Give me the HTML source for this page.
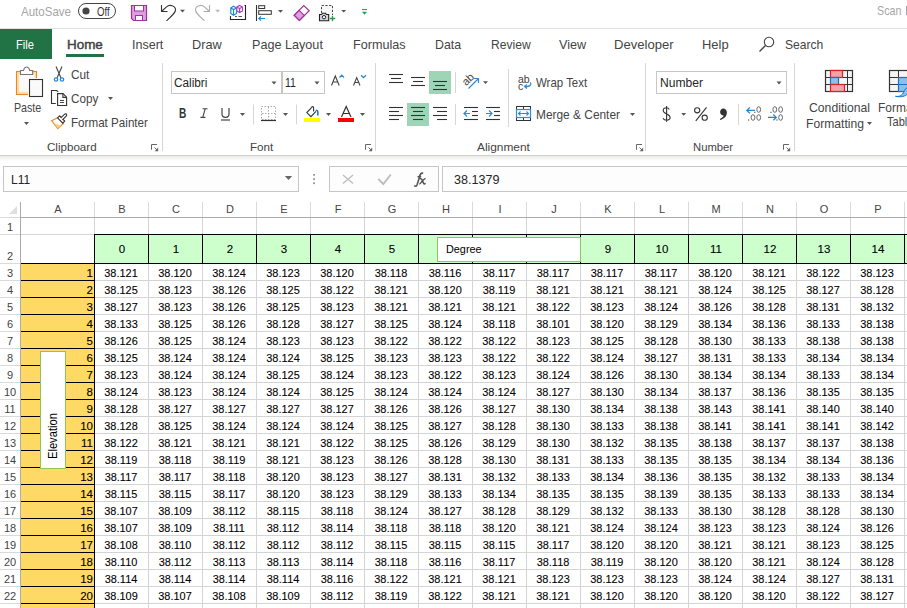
<!DOCTYPE html><html><head><meta charset="utf-8"><style>
html,body{margin:0;padding:0}
body{width:907px;height:608px;overflow:hidden;position:relative;background:#fff;font-family:"Liberation Sans",sans-serif}
.t{position:absolute;white-space:nowrap;transform-origin:0 0;z-index:3}
.b{position:absolute}
.s{position:absolute;overflow:visible;z-index:2}
.hc{position:absolute;top:202px;height:14px;line-height:14px;text-align:center;font-size:11px;color:#444}
.rh{position:absolute;left:0;width:20px;height:14px;line-height:14px;text-align:center;font-size:11px;color:#444}
.gc{position:absolute;height:14px;line-height:14px;text-align:center;font-size:11.5px;color:#000;-webkit-text-stroke:0.1px #000}
.an{position:absolute;left:21px;width:72px;height:14px;line-height:14px;text-align:right;font-size:11.5px;color:#000;-webkit-text-stroke:0.1px #000}
.nc{position:absolute;width:54px;height:14px;line-height:14px;text-align:center;font-size:11.7px;color:#000;transform:scaleX(0.935);-webkit-text-stroke:0.1px #000}
</style></head><body>
<div class="b" style="left:0px;top:202px;width:907px;height:15px;background:#fff"></div>
<div class="b" style="left:0px;top:217px;width:20px;height:1px;background:#DADADA"></div>
<div class="b" style="left:20px;top:217px;width:887px;height:1px;background:#ABABAB"></div>
<div class="b" style="left:20px;top:202px;width:1px;height:406px;background:#ABABAB"></div>
<svg class="s" style="left:9px;top:206px;" width="8" height="8" viewBox="0 0 8 8"><path d="M8 0 L8 8 L0 8 Z" fill="#DFDFDF"/></svg>
<div class="b" style="left:94px;top:202px;width:1px;height:15px;background:#DADADA"></div>
<div class="b" style="left:148px;top:202px;width:1px;height:15px;background:#DADADA"></div>
<div class="b" style="left:202px;top:202px;width:1px;height:15px;background:#DADADA"></div>
<div class="b" style="left:256px;top:202px;width:1px;height:15px;background:#DADADA"></div>
<div class="b" style="left:310px;top:202px;width:1px;height:15px;background:#DADADA"></div>
<div class="b" style="left:364px;top:202px;width:1px;height:15px;background:#DADADA"></div>
<div class="b" style="left:418px;top:202px;width:1px;height:15px;background:#DADADA"></div>
<div class="b" style="left:472px;top:202px;width:1px;height:15px;background:#DADADA"></div>
<div class="b" style="left:526px;top:202px;width:1px;height:15px;background:#DADADA"></div>
<div class="b" style="left:580px;top:202px;width:1px;height:15px;background:#DADADA"></div>
<div class="b" style="left:634px;top:202px;width:1px;height:15px;background:#DADADA"></div>
<div class="b" style="left:688px;top:202px;width:1px;height:15px;background:#DADADA"></div>
<div class="b" style="left:742px;top:202px;width:1px;height:15px;background:#DADADA"></div>
<div class="b" style="left:796px;top:202px;width:1px;height:15px;background:#DADADA"></div>
<div class="b" style="left:850px;top:202px;width:1px;height:15px;background:#DADADA"></div>
<div class="b" style="left:904px;top:202px;width:1px;height:15px;background:#DADADA"></div>
<div class="b" style="left:21px;top:234px;width:886px;height:1px;background:#D4D4D4"></div>
<div class="b" style="left:0px;top:234px;width:20px;height:1px;background:#DADADA"></div>
<div class="b" style="left:21px;top:263px;width:886px;height:1px;background:#D4D4D4"></div>
<div class="b" style="left:0px;top:263px;width:20px;height:1px;background:#DADADA"></div>
<div class="b" style="left:21px;top:280px;width:886px;height:1px;background:#D4D4D4"></div>
<div class="b" style="left:0px;top:280px;width:20px;height:1px;background:#DADADA"></div>
<div class="b" style="left:21px;top:297px;width:886px;height:1px;background:#D4D4D4"></div>
<div class="b" style="left:0px;top:297px;width:20px;height:1px;background:#DADADA"></div>
<div class="b" style="left:21px;top:314px;width:886px;height:1px;background:#D4D4D4"></div>
<div class="b" style="left:0px;top:314px;width:20px;height:1px;background:#DADADA"></div>
<div class="b" style="left:21px;top:331px;width:886px;height:1px;background:#D4D4D4"></div>
<div class="b" style="left:0px;top:331px;width:20px;height:1px;background:#DADADA"></div>
<div class="b" style="left:21px;top:348px;width:886px;height:1px;background:#D4D4D4"></div>
<div class="b" style="left:0px;top:348px;width:20px;height:1px;background:#DADADA"></div>
<div class="b" style="left:21px;top:365px;width:886px;height:1px;background:#D4D4D4"></div>
<div class="b" style="left:0px;top:365px;width:20px;height:1px;background:#DADADA"></div>
<div class="b" style="left:21px;top:382px;width:886px;height:1px;background:#D4D4D4"></div>
<div class="b" style="left:0px;top:382px;width:20px;height:1px;background:#DADADA"></div>
<div class="b" style="left:21px;top:399px;width:886px;height:1px;background:#D4D4D4"></div>
<div class="b" style="left:0px;top:399px;width:20px;height:1px;background:#DADADA"></div>
<div class="b" style="left:21px;top:416px;width:886px;height:1px;background:#D4D4D4"></div>
<div class="b" style="left:0px;top:416px;width:20px;height:1px;background:#DADADA"></div>
<div class="b" style="left:21px;top:433px;width:886px;height:1px;background:#D4D4D4"></div>
<div class="b" style="left:0px;top:433px;width:20px;height:1px;background:#DADADA"></div>
<div class="b" style="left:21px;top:450px;width:886px;height:1px;background:#D4D4D4"></div>
<div class="b" style="left:0px;top:450px;width:20px;height:1px;background:#DADADA"></div>
<div class="b" style="left:21px;top:467px;width:886px;height:1px;background:#D4D4D4"></div>
<div class="b" style="left:0px;top:467px;width:20px;height:1px;background:#DADADA"></div>
<div class="b" style="left:21px;top:484px;width:886px;height:1px;background:#D4D4D4"></div>
<div class="b" style="left:0px;top:484px;width:20px;height:1px;background:#DADADA"></div>
<div class="b" style="left:21px;top:501px;width:886px;height:1px;background:#D4D4D4"></div>
<div class="b" style="left:0px;top:501px;width:20px;height:1px;background:#DADADA"></div>
<div class="b" style="left:21px;top:518px;width:886px;height:1px;background:#D4D4D4"></div>
<div class="b" style="left:0px;top:518px;width:20px;height:1px;background:#DADADA"></div>
<div class="b" style="left:21px;top:535px;width:886px;height:1px;background:#D4D4D4"></div>
<div class="b" style="left:0px;top:535px;width:20px;height:1px;background:#DADADA"></div>
<div class="b" style="left:21px;top:552px;width:886px;height:1px;background:#D4D4D4"></div>
<div class="b" style="left:0px;top:552px;width:20px;height:1px;background:#DADADA"></div>
<div class="b" style="left:21px;top:569px;width:886px;height:1px;background:#D4D4D4"></div>
<div class="b" style="left:0px;top:569px;width:20px;height:1px;background:#DADADA"></div>
<div class="b" style="left:21px;top:586px;width:886px;height:1px;background:#D4D4D4"></div>
<div class="b" style="left:0px;top:586px;width:20px;height:1px;background:#DADADA"></div>
<div class="b" style="left:21px;top:603px;width:886px;height:1px;background:#D4D4D4"></div>
<div class="b" style="left:0px;top:603px;width:20px;height:1px;background:#DADADA"></div>
<div class="b" style="left:94px;top:218px;width:1px;height:390px;background:#D4D4D4"></div>
<div class="b" style="left:148px;top:218px;width:1px;height:390px;background:#D4D4D4"></div>
<div class="b" style="left:202px;top:218px;width:1px;height:390px;background:#D4D4D4"></div>
<div class="b" style="left:256px;top:218px;width:1px;height:390px;background:#D4D4D4"></div>
<div class="b" style="left:310px;top:218px;width:1px;height:390px;background:#D4D4D4"></div>
<div class="b" style="left:364px;top:218px;width:1px;height:390px;background:#D4D4D4"></div>
<div class="b" style="left:418px;top:218px;width:1px;height:390px;background:#D4D4D4"></div>
<div class="b" style="left:472px;top:218px;width:1px;height:390px;background:#D4D4D4"></div>
<div class="b" style="left:526px;top:218px;width:1px;height:390px;background:#D4D4D4"></div>
<div class="b" style="left:580px;top:218px;width:1px;height:390px;background:#D4D4D4"></div>
<div class="b" style="left:634px;top:218px;width:1px;height:390px;background:#D4D4D4"></div>
<div class="b" style="left:688px;top:218px;width:1px;height:390px;background:#D4D4D4"></div>
<div class="b" style="left:742px;top:218px;width:1px;height:390px;background:#D4D4D4"></div>
<div class="b" style="left:796px;top:218px;width:1px;height:390px;background:#D4D4D4"></div>
<div class="b" style="left:850px;top:218px;width:1px;height:390px;background:#D4D4D4"></div>
<div class="b" style="left:904px;top:218px;width:1px;height:390px;background:#D4D4D4"></div>
<div id="grid">
</div>
<div class="b" style="left:94px;top:234px;width:813px;height:30px;background:#CCFFCC"></div>
<div class="b" style="left:94px;top:234px;width:813px;height:1px;background:#000"></div>
<div class="b" style="left:94px;top:263px;width:813px;height:1px;background:#000"></div>
<div class="b" style="left:94px;top:234px;width:1px;height:30px;background:#000"></div>
<div class="b" style="left:148px;top:234px;width:1px;height:30px;background:#000"></div>
<div class="b" style="left:202px;top:234px;width:1px;height:30px;background:#000"></div>
<div class="b" style="left:256px;top:234px;width:1px;height:30px;background:#000"></div>
<div class="b" style="left:310px;top:234px;width:1px;height:30px;background:#000"></div>
<div class="b" style="left:364px;top:234px;width:1px;height:30px;background:#000"></div>
<div class="b" style="left:418px;top:234px;width:1px;height:30px;background:#000"></div>
<div class="b" style="left:472px;top:234px;width:1px;height:30px;background:#000"></div>
<div class="b" style="left:526px;top:234px;width:1px;height:30px;background:#000"></div>
<div class="b" style="left:580px;top:234px;width:1px;height:30px;background:#000"></div>
<div class="b" style="left:634px;top:234px;width:1px;height:30px;background:#000"></div>
<div class="b" style="left:688px;top:234px;width:1px;height:30px;background:#000"></div>
<div class="b" style="left:742px;top:234px;width:1px;height:30px;background:#000"></div>
<div class="b" style="left:796px;top:234px;width:1px;height:30px;background:#000"></div>
<div class="b" style="left:850px;top:234px;width:1px;height:30px;background:#000"></div>
<div class="b" style="left:904px;top:234px;width:1px;height:30px;background:#000"></div>
<div class="b" style="left:21px;top:264px;width:73px;height:344px;background:#FFD966"></div>
<div class="b" style="left:21px;top:263px;width:74px;height:1px;background:#000"></div>
<div class="b" style="left:21px;top:280px;width:74px;height:1px;background:#000"></div>
<div class="b" style="left:21px;top:297px;width:74px;height:1px;background:#000"></div>
<div class="b" style="left:21px;top:314px;width:74px;height:1px;background:#000"></div>
<div class="b" style="left:21px;top:331px;width:74px;height:1px;background:#000"></div>
<div class="b" style="left:21px;top:348px;width:74px;height:1px;background:#000"></div>
<div class="b" style="left:21px;top:365px;width:74px;height:1px;background:#000"></div>
<div class="b" style="left:21px;top:382px;width:74px;height:1px;background:#000"></div>
<div class="b" style="left:21px;top:399px;width:74px;height:1px;background:#000"></div>
<div class="b" style="left:21px;top:416px;width:74px;height:1px;background:#000"></div>
<div class="b" style="left:21px;top:433px;width:74px;height:1px;background:#000"></div>
<div class="b" style="left:21px;top:450px;width:74px;height:1px;background:#000"></div>
<div class="b" style="left:21px;top:467px;width:74px;height:1px;background:#000"></div>
<div class="b" style="left:21px;top:484px;width:74px;height:1px;background:#000"></div>
<div class="b" style="left:21px;top:501px;width:74px;height:1px;background:#000"></div>
<div class="b" style="left:21px;top:518px;width:74px;height:1px;background:#000"></div>
<div class="b" style="left:21px;top:535px;width:74px;height:1px;background:#000"></div>
<div class="b" style="left:21px;top:552px;width:74px;height:1px;background:#000"></div>
<div class="b" style="left:21px;top:569px;width:74px;height:1px;background:#000"></div>
<div class="b" style="left:21px;top:586px;width:74px;height:1px;background:#000"></div>
<div class="b" style="left:21px;top:603px;width:74px;height:1px;background:#000"></div>
<div class="b" style="left:94px;top:263px;width:1px;height:345px;background:#000"></div>
<div class="hc" style="left:21px;width:74px">A</div>
<div class="hc" style="left:95px;width:54px">B</div>
<div class="hc" style="left:149px;width:54px">C</div>
<div class="hc" style="left:203px;width:54px">D</div>
<div class="hc" style="left:257px;width:54px">E</div>
<div class="hc" style="left:311px;width:54px">F</div>
<div class="hc" style="left:365px;width:54px">G</div>
<div class="hc" style="left:419px;width:54px">H</div>
<div class="hc" style="left:473px;width:54px">I</div>
<div class="hc" style="left:527px;width:54px">J</div>
<div class="hc" style="left:581px;width:54px">K</div>
<div class="hc" style="left:635px;width:54px">L</div>
<div class="hc" style="left:689px;width:54px">M</div>
<div class="hc" style="left:743px;width:54px">N</div>
<div class="hc" style="left:797px;width:54px">O</div>
<div class="hc" style="left:851px;width:54px">P</div>
<div class="rh" style="top:220px">1</div>
<div class="rh" style="top:249px">2</div>
<div class="rh" style="top:266px">3</div>
<div class="rh" style="top:283px">4</div>
<div class="rh" style="top:300px">5</div>
<div class="rh" style="top:317px">6</div>
<div class="rh" style="top:334px">7</div>
<div class="rh" style="top:351px">8</div>
<div class="rh" style="top:368px">9</div>
<div class="rh" style="top:385px">10</div>
<div class="rh" style="top:402px">11</div>
<div class="rh" style="top:419px">12</div>
<div class="rh" style="top:436px">13</div>
<div class="rh" style="top:453px">14</div>
<div class="rh" style="top:470px">15</div>
<div class="rh" style="top:487px">16</div>
<div class="rh" style="top:504px">17</div>
<div class="rh" style="top:521px">18</div>
<div class="rh" style="top:538px">19</div>
<div class="rh" style="top:555px">20</div>
<div class="rh" style="top:572px">21</div>
<div class="rh" style="top:589px">22</div>
<div class="gc" style="left:95px;width:54px;top:242px">0</div>
<div class="gc" style="left:149px;width:54px;top:242px">1</div>
<div class="gc" style="left:203px;width:54px;top:242px">2</div>
<div class="gc" style="left:257px;width:54px;top:242px">3</div>
<div class="gc" style="left:311px;width:54px;top:242px">4</div>
<div class="gc" style="left:365px;width:54px;top:242px">5</div>
<div class="gc" style="left:581px;width:54px;top:242px">9</div>
<div class="gc" style="left:635px;width:54px;top:242px">10</div>
<div class="gc" style="left:689px;width:54px;top:242px">11</div>
<div class="gc" style="left:743px;width:54px;top:242px">12</div>
<div class="gc" style="left:797px;width:54px;top:242px">13</div>
<div class="gc" style="left:851px;width:54px;top:242px">14</div>
<div class="an" style="top:266px">1</div>
<div class="an" style="top:283px">2</div>
<div class="an" style="top:300px">3</div>
<div class="an" style="top:317px">4</div>
<div class="an" style="top:334px">5</div>
<div class="an" style="top:351px">6</div>
<div class="an" style="top:368px">7</div>
<div class="an" style="top:385px">8</div>
<div class="an" style="top:402px">9</div>
<div class="an" style="top:419px">10</div>
<div class="an" style="top:436px">11</div>
<div class="an" style="top:453px">12</div>
<div class="an" style="top:470px">13</div>
<div class="an" style="top:487px">14</div>
<div class="an" style="top:504px">15</div>
<div class="an" style="top:521px">16</div>
<div class="an" style="top:538px">17</div>
<div class="an" style="top:555px">18</div>
<div class="an" style="top:572px">19</div>
<div class="an" style="top:589px">20</div>
<div class="nc" style="left:94px;top:266px">38.121</div>
<div class="nc" style="left:148px;top:266px">38.120</div>
<div class="nc" style="left:202px;top:266px">38.124</div>
<div class="nc" style="left:256px;top:266px">38.123</div>
<div class="nc" style="left:310px;top:266px">38.120</div>
<div class="nc" style="left:364px;top:266px">38.118</div>
<div class="nc" style="left:418px;top:266px">38.116</div>
<div class="nc" style="left:472px;top:266px">38.117</div>
<div class="nc" style="left:526px;top:266px">38.117</div>
<div class="nc" style="left:580px;top:266px">38.117</div>
<div class="nc" style="left:634px;top:266px">38.117</div>
<div class="nc" style="left:688px;top:266px">38.120</div>
<div class="nc" style="left:742px;top:266px">38.121</div>
<div class="nc" style="left:796px;top:266px">38.122</div>
<div class="nc" style="left:850px;top:266px">38.123</div>
<div class="nc" style="left:94px;top:283px">38.125</div>
<div class="nc" style="left:148px;top:283px">38.123</div>
<div class="nc" style="left:202px;top:283px">38.126</div>
<div class="nc" style="left:256px;top:283px">38.125</div>
<div class="nc" style="left:310px;top:283px">38.122</div>
<div class="nc" style="left:364px;top:283px">38.121</div>
<div class="nc" style="left:418px;top:283px">38.120</div>
<div class="nc" style="left:472px;top:283px">38.119</div>
<div class="nc" style="left:526px;top:283px">38.121</div>
<div class="nc" style="left:580px;top:283px">38.121</div>
<div class="nc" style="left:634px;top:283px">38.121</div>
<div class="nc" style="left:688px;top:283px">38.124</div>
<div class="nc" style="left:742px;top:283px">38.125</div>
<div class="nc" style="left:796px;top:283px">38.127</div>
<div class="nc" style="left:850px;top:283px">38.128</div>
<div class="nc" style="left:94px;top:300px">38.127</div>
<div class="nc" style="left:148px;top:300px">38.123</div>
<div class="nc" style="left:202px;top:300px">38.126</div>
<div class="nc" style="left:256px;top:300px">38.125</div>
<div class="nc" style="left:310px;top:300px">38.123</div>
<div class="nc" style="left:364px;top:300px">38.121</div>
<div class="nc" style="left:418px;top:300px">38.121</div>
<div class="nc" style="left:472px;top:300px">38.121</div>
<div class="nc" style="left:526px;top:300px">38.122</div>
<div class="nc" style="left:580px;top:300px">38.123</div>
<div class="nc" style="left:634px;top:300px">38.124</div>
<div class="nc" style="left:688px;top:300px">38.126</div>
<div class="nc" style="left:742px;top:300px">38.128</div>
<div class="nc" style="left:796px;top:300px">38.131</div>
<div class="nc" style="left:850px;top:300px">38.132</div>
<div class="nc" style="left:94px;top:317px">38.133</div>
<div class="nc" style="left:148px;top:317px">38.125</div>
<div class="nc" style="left:202px;top:317px">38.126</div>
<div class="nc" style="left:256px;top:317px">38.128</div>
<div class="nc" style="left:310px;top:317px">38.127</div>
<div class="nc" style="left:364px;top:317px">38.125</div>
<div class="nc" style="left:418px;top:317px">38.124</div>
<div class="nc" style="left:472px;top:317px">38.118</div>
<div class="nc" style="left:526px;top:317px">38.101</div>
<div class="nc" style="left:580px;top:317px">38.120</div>
<div class="nc" style="left:634px;top:317px">38.129</div>
<div class="nc" style="left:688px;top:317px">38.134</div>
<div class="nc" style="left:742px;top:317px">38.136</div>
<div class="nc" style="left:796px;top:317px">38.133</div>
<div class="nc" style="left:850px;top:317px">38.138</div>
<div class="nc" style="left:94px;top:334px">38.126</div>
<div class="nc" style="left:148px;top:334px">38.125</div>
<div class="nc" style="left:202px;top:334px">38.124</div>
<div class="nc" style="left:256px;top:334px">38.123</div>
<div class="nc" style="left:310px;top:334px">38.123</div>
<div class="nc" style="left:364px;top:334px">38.122</div>
<div class="nc" style="left:418px;top:334px">38.122</div>
<div class="nc" style="left:472px;top:334px">38.122</div>
<div class="nc" style="left:526px;top:334px">38.123</div>
<div class="nc" style="left:580px;top:334px">38.125</div>
<div class="nc" style="left:634px;top:334px">38.128</div>
<div class="nc" style="left:688px;top:334px">38.130</div>
<div class="nc" style="left:742px;top:334px">38.133</div>
<div class="nc" style="left:796px;top:334px">38.138</div>
<div class="nc" style="left:850px;top:334px">38.138</div>
<div class="nc" style="left:94px;top:351px">38.125</div>
<div class="nc" style="left:148px;top:351px">38.124</div>
<div class="nc" style="left:202px;top:351px">38.124</div>
<div class="nc" style="left:256px;top:351px">38.124</div>
<div class="nc" style="left:310px;top:351px">38.125</div>
<div class="nc" style="left:364px;top:351px">38.123</div>
<div class="nc" style="left:418px;top:351px">38.123</div>
<div class="nc" style="left:472px;top:351px">38.122</div>
<div class="nc" style="left:526px;top:351px">38.122</div>
<div class="nc" style="left:580px;top:351px">38.124</div>
<div class="nc" style="left:634px;top:351px">38.127</div>
<div class="nc" style="left:688px;top:351px">38.131</div>
<div class="nc" style="left:742px;top:351px">38.133</div>
<div class="nc" style="left:796px;top:351px">38.134</div>
<div class="nc" style="left:850px;top:351px">38.134</div>
<div class="nc" style="left:94px;top:368px">38.123</div>
<div class="nc" style="left:148px;top:368px">38.124</div>
<div class="nc" style="left:202px;top:368px">38.124</div>
<div class="nc" style="left:256px;top:368px">38.125</div>
<div class="nc" style="left:310px;top:368px">38.124</div>
<div class="nc" style="left:364px;top:368px">38.123</div>
<div class="nc" style="left:418px;top:368px">38.122</div>
<div class="nc" style="left:472px;top:368px">38.123</div>
<div class="nc" style="left:526px;top:368px">38.124</div>
<div class="nc" style="left:580px;top:368px">38.126</div>
<div class="nc" style="left:634px;top:368px">38.130</div>
<div class="nc" style="left:688px;top:368px">38.134</div>
<div class="nc" style="left:742px;top:368px">38.134</div>
<div class="nc" style="left:796px;top:368px">38.133</div>
<div class="nc" style="left:850px;top:368px">38.134</div>
<div class="nc" style="left:94px;top:385px">38.124</div>
<div class="nc" style="left:148px;top:385px">38.123</div>
<div class="nc" style="left:202px;top:385px">38.124</div>
<div class="nc" style="left:256px;top:385px">38.124</div>
<div class="nc" style="left:310px;top:385px">38.125</div>
<div class="nc" style="left:364px;top:385px">38.124</div>
<div class="nc" style="left:418px;top:385px">38.124</div>
<div class="nc" style="left:472px;top:385px">38.124</div>
<div class="nc" style="left:526px;top:385px">38.127</div>
<div class="nc" style="left:580px;top:385px">38.130</div>
<div class="nc" style="left:634px;top:385px">38.134</div>
<div class="nc" style="left:688px;top:385px">38.137</div>
<div class="nc" style="left:742px;top:385px">38.136</div>
<div class="nc" style="left:796px;top:385px">38.135</div>
<div class="nc" style="left:850px;top:385px">38.135</div>
<div class="nc" style="left:94px;top:402px">38.128</div>
<div class="nc" style="left:148px;top:402px">38.127</div>
<div class="nc" style="left:202px;top:402px">38.127</div>
<div class="nc" style="left:256px;top:402px">38.127</div>
<div class="nc" style="left:310px;top:402px">38.127</div>
<div class="nc" style="left:364px;top:402px">38.126</div>
<div class="nc" style="left:418px;top:402px">38.126</div>
<div class="nc" style="left:472px;top:402px">38.127</div>
<div class="nc" style="left:526px;top:402px">38.130</div>
<div class="nc" style="left:580px;top:402px">38.134</div>
<div class="nc" style="left:634px;top:402px">38.138</div>
<div class="nc" style="left:688px;top:402px">38.143</div>
<div class="nc" style="left:742px;top:402px">38.141</div>
<div class="nc" style="left:796px;top:402px">38.140</div>
<div class="nc" style="left:850px;top:402px">38.140</div>
<div class="nc" style="left:94px;top:419px">38.128</div>
<div class="nc" style="left:148px;top:419px">38.125</div>
<div class="nc" style="left:202px;top:419px">38.124</div>
<div class="nc" style="left:256px;top:419px">38.124</div>
<div class="nc" style="left:310px;top:419px">38.124</div>
<div class="nc" style="left:364px;top:419px">38.125</div>
<div class="nc" style="left:418px;top:419px">38.127</div>
<div class="nc" style="left:472px;top:419px">38.128</div>
<div class="nc" style="left:526px;top:419px">38.130</div>
<div class="nc" style="left:580px;top:419px">38.133</div>
<div class="nc" style="left:634px;top:419px">38.138</div>
<div class="nc" style="left:688px;top:419px">38.141</div>
<div class="nc" style="left:742px;top:419px">38.141</div>
<div class="nc" style="left:796px;top:419px">38.141</div>
<div class="nc" style="left:850px;top:419px">38.142</div>
<div class="nc" style="left:94px;top:436px">38.122</div>
<div class="nc" style="left:148px;top:436px">38.121</div>
<div class="nc" style="left:202px;top:436px">38.121</div>
<div class="nc" style="left:256px;top:436px">38.121</div>
<div class="nc" style="left:310px;top:436px">38.122</div>
<div class="nc" style="left:364px;top:436px">38.125</div>
<div class="nc" style="left:418px;top:436px">38.126</div>
<div class="nc" style="left:472px;top:436px">38.129</div>
<div class="nc" style="left:526px;top:436px">38.130</div>
<div class="nc" style="left:580px;top:436px">38.132</div>
<div class="nc" style="left:634px;top:436px">38.135</div>
<div class="nc" style="left:688px;top:436px">38.138</div>
<div class="nc" style="left:742px;top:436px">38.137</div>
<div class="nc" style="left:796px;top:436px">38.137</div>
<div class="nc" style="left:850px;top:436px">38.138</div>
<div class="nc" style="left:94px;top:453px">38.119</div>
<div class="nc" style="left:148px;top:453px">38.118</div>
<div class="nc" style="left:202px;top:453px">38.119</div>
<div class="nc" style="left:256px;top:453px">38.121</div>
<div class="nc" style="left:310px;top:453px">38.123</div>
<div class="nc" style="left:364px;top:453px">38.126</div>
<div class="nc" style="left:418px;top:453px">38.128</div>
<div class="nc" style="left:472px;top:453px">38.130</div>
<div class="nc" style="left:526px;top:453px">38.131</div>
<div class="nc" style="left:580px;top:453px">38.133</div>
<div class="nc" style="left:634px;top:453px">38.135</div>
<div class="nc" style="left:688px;top:453px">38.135</div>
<div class="nc" style="left:742px;top:453px">38.134</div>
<div class="nc" style="left:796px;top:453px">38.134</div>
<div class="nc" style="left:850px;top:453px">38.136</div>
<div class="nc" style="left:94px;top:470px">38.117</div>
<div class="nc" style="left:148px;top:470px">38.117</div>
<div class="nc" style="left:202px;top:470px">38.118</div>
<div class="nc" style="left:256px;top:470px">38.120</div>
<div class="nc" style="left:310px;top:470px">38.123</div>
<div class="nc" style="left:364px;top:470px">38.127</div>
<div class="nc" style="left:418px;top:470px">38.131</div>
<div class="nc" style="left:472px;top:470px">38.132</div>
<div class="nc" style="left:526px;top:470px">38.133</div>
<div class="nc" style="left:580px;top:470px">38.134</div>
<div class="nc" style="left:634px;top:470px">38.136</div>
<div class="nc" style="left:688px;top:470px">38.135</div>
<div class="nc" style="left:742px;top:470px">38.132</div>
<div class="nc" style="left:796px;top:470px">38.133</div>
<div class="nc" style="left:850px;top:470px">38.134</div>
<div class="nc" style="left:94px;top:487px">38.115</div>
<div class="nc" style="left:148px;top:487px">38.115</div>
<div class="nc" style="left:202px;top:487px">38.117</div>
<div class="nc" style="left:256px;top:487px">38.120</div>
<div class="nc" style="left:310px;top:487px">38.123</div>
<div class="nc" style="left:364px;top:487px">38.129</div>
<div class="nc" style="left:418px;top:487px">38.133</div>
<div class="nc" style="left:472px;top:487px">38.134</div>
<div class="nc" style="left:526px;top:487px">38.135</div>
<div class="nc" style="left:580px;top:487px">38.135</div>
<div class="nc" style="left:634px;top:487px">38.139</div>
<div class="nc" style="left:688px;top:487px">38.135</div>
<div class="nc" style="left:742px;top:487px">38.133</div>
<div class="nc" style="left:796px;top:487px">38.133</div>
<div class="nc" style="left:850px;top:487px">38.134</div>
<div class="nc" style="left:94px;top:504px">38.107</div>
<div class="nc" style="left:148px;top:504px">38.109</div>
<div class="nc" style="left:202px;top:504px">38.112</div>
<div class="nc" style="left:256px;top:504px">38.115</div>
<div class="nc" style="left:310px;top:504px">38.118</div>
<div class="nc" style="left:364px;top:504px">38.124</div>
<div class="nc" style="left:418px;top:504px">38.127</div>
<div class="nc" style="left:472px;top:504px">38.128</div>
<div class="nc" style="left:526px;top:504px">38.129</div>
<div class="nc" style="left:580px;top:504px">38.132</div>
<div class="nc" style="left:634px;top:504px">38.133</div>
<div class="nc" style="left:688px;top:504px">38.130</div>
<div class="nc" style="left:742px;top:504px">38.128</div>
<div class="nc" style="left:796px;top:504px">38.128</div>
<div class="nc" style="left:850px;top:504px">38.130</div>
<div class="nc" style="left:94px;top:521px">38.107</div>
<div class="nc" style="left:148px;top:521px">38.109</div>
<div class="nc" style="left:202px;top:521px">38.111</div>
<div class="nc" style="left:256px;top:521px">38.112</div>
<div class="nc" style="left:310px;top:521px">38.114</div>
<div class="nc" style="left:364px;top:521px">38.118</div>
<div class="nc" style="left:418px;top:521px">38.118</div>
<div class="nc" style="left:472px;top:521px">38.120</div>
<div class="nc" style="left:526px;top:521px">38.121</div>
<div class="nc" style="left:580px;top:521px">38.124</div>
<div class="nc" style="left:634px;top:521px">38.124</div>
<div class="nc" style="left:688px;top:521px">38.123</div>
<div class="nc" style="left:742px;top:521px">38.123</div>
<div class="nc" style="left:796px;top:521px">38.124</div>
<div class="nc" style="left:850px;top:521px">38.126</div>
<div class="nc" style="left:94px;top:538px">38.108</div>
<div class="nc" style="left:148px;top:538px">38.110</div>
<div class="nc" style="left:202px;top:538px">38.112</div>
<div class="nc" style="left:256px;top:538px">38.112</div>
<div class="nc" style="left:310px;top:538px">38.112</div>
<div class="nc" style="left:364px;top:538px">38.115</div>
<div class="nc" style="left:418px;top:538px">38.115</div>
<div class="nc" style="left:472px;top:538px">38.115</div>
<div class="nc" style="left:526px;top:538px">38.117</div>
<div class="nc" style="left:580px;top:538px">38.120</div>
<div class="nc" style="left:634px;top:538px">38.120</div>
<div class="nc" style="left:688px;top:538px">38.121</div>
<div class="nc" style="left:742px;top:538px">38.121</div>
<div class="nc" style="left:796px;top:538px">38.123</div>
<div class="nc" style="left:850px;top:538px">38.125</div>
<div class="nc" style="left:94px;top:555px">38.110</div>
<div class="nc" style="left:148px;top:555px">38.112</div>
<div class="nc" style="left:202px;top:555px">38.113</div>
<div class="nc" style="left:256px;top:555px">38.113</div>
<div class="nc" style="left:310px;top:555px">38.114</div>
<div class="nc" style="left:364px;top:555px">38.118</div>
<div class="nc" style="left:418px;top:555px">38.116</div>
<div class="nc" style="left:472px;top:555px">38.117</div>
<div class="nc" style="left:526px;top:555px">38.118</div>
<div class="nc" style="left:580px;top:555px">38.119</div>
<div class="nc" style="left:634px;top:555px">38.120</div>
<div class="nc" style="left:688px;top:555px">38.120</div>
<div class="nc" style="left:742px;top:555px">38.121</div>
<div class="nc" style="left:796px;top:555px">38.124</div>
<div class="nc" style="left:850px;top:555px">38.128</div>
<div class="nc" style="left:94px;top:572px">38.114</div>
<div class="nc" style="left:148px;top:572px">38.114</div>
<div class="nc" style="left:202px;top:572px">38.114</div>
<div class="nc" style="left:256px;top:572px">38.114</div>
<div class="nc" style="left:310px;top:572px">38.116</div>
<div class="nc" style="left:364px;top:572px">38.122</div>
<div class="nc" style="left:418px;top:572px">38.121</div>
<div class="nc" style="left:472px;top:572px">38.121</div>
<div class="nc" style="left:526px;top:572px">38.123</div>
<div class="nc" style="left:580px;top:572px">38.123</div>
<div class="nc" style="left:634px;top:572px">38.123</div>
<div class="nc" style="left:688px;top:572px">38.124</div>
<div class="nc" style="left:742px;top:572px">38.124</div>
<div class="nc" style="left:796px;top:572px">38.127</div>
<div class="nc" style="left:850px;top:572px">38.131</div>
<div class="nc" style="left:94px;top:589px">38.109</div>
<div class="nc" style="left:148px;top:589px">38.107</div>
<div class="nc" style="left:202px;top:589px">38.108</div>
<div class="nc" style="left:256px;top:589px">38.109</div>
<div class="nc" style="left:310px;top:589px">38.112</div>
<div class="nc" style="left:364px;top:589px">38.119</div>
<div class="nc" style="left:418px;top:589px">38.122</div>
<div class="nc" style="left:472px;top:589px">38.121</div>
<div class="nc" style="left:526px;top:589px">38.121</div>
<div class="nc" style="left:580px;top:589px">38.120</div>
<div class="nc" style="left:634px;top:589px">38.120</div>
<div class="nc" style="left:688px;top:589px">38.120</div>
<div class="nc" style="left:742px;top:589px">38.120</div>
<div class="nc" style="left:796px;top:589px">38.122</div>
<div class="nc" style="left:850px;top:589px">38.127</div>
<div class="b" style="left:437px;top:237px;width:144px;height:25px;background:#fff;border:1px solid #8DC95A;box-sizing:border-box"></div>
<div class="t" style="left:445.60px;top:242.53px;font-size:11.30px;line-height:13.00px;color:#000;font-weight:normal;transform:scaleX(0.960);">Degree</div>
<div class="b" style="left:40px;top:351px;width:26px;height:118px;background:#fff;border:1px solid #8DC95A;box-sizing:border-box"></div>
<div class="t" style="left:45.64px;top:459.30px;font-size:12.69px;line-height:14.59px;color:#000;font-weight:normal;transform:rotate(-90deg) scaleX(0.879);">Elevation</div>
<div class="b" style="left:0px;top:28px;width:907px;height:1px;background:#E1E1E1"></div>
<div class="t" style="left:20.90px;top:5.06px;font-size:12.67px;line-height:14.57px;color:#A6A6A6;font-weight:normal;transform:scaleX(0.911);">AutoSave</div>
<div class="t" style="left:96.90px;top:5.09px;font-size:12.32px;line-height:14.17px;color:#333;font-weight:normal;transform:scaleX(0.781);">Off</div>
<div class="b" style="left:0px;top:29px;width:52px;height:30px;background:#217346"></div>
<div class="t" style="left:15.50px;top:38.08px;font-size:12.75px;line-height:14.67px;color:#fff;font-weight:normal;transform:scaleX(0.872);">File</div>
<div class="t" style="left:66.80px;top:38.08px;font-size:12.75px;line-height:14.67px;color:#444;font-weight:normal;transform:scaleX(1.051);-webkit-text-stroke:0.45px #444">Home</div>
<div class="b" style="left:66px;top:54px;width:38px;height:3px;background:#217346"></div>
<div class="t" style="left:131.50px;top:38.08px;font-size:12.75px;line-height:14.67px;color:#444;font-weight:normal;transform:scaleX(0.982);">Insert</div>
<div class="t" style="left:192.20px;top:38.08px;font-size:12.75px;line-height:14.67px;color:#444;font-weight:normal;transform:scaleX(1.001);">Draw</div>
<div class="t" style="left:252.00px;top:38.08px;font-size:12.75px;line-height:14.67px;color:#444;font-weight:normal;transform:scaleX(0.990);">Page Layout</div>
<div class="t" style="left:353.00px;top:38.08px;font-size:12.75px;line-height:14.67px;color:#444;font-weight:normal;transform:scaleX(0.989);">Formulas</div>
<div class="t" style="left:435.30px;top:38.08px;font-size:12.75px;line-height:14.67px;color:#444;font-weight:normal;transform:scaleX(0.971);">Data</div>
<div class="t" style="left:491.30px;top:38.08px;font-size:12.75px;line-height:14.67px;color:#444;font-weight:normal;transform:scaleX(0.949);">Review</div>
<div class="t" style="left:558.80px;top:38.08px;font-size:12.75px;line-height:14.67px;color:#444;font-weight:normal;transform:scaleX(0.992);">View</div>
<div class="t" style="left:613.90px;top:38.08px;font-size:12.75px;line-height:14.67px;color:#444;font-weight:normal;transform:scaleX(1.025);">Developer</div>
<div class="t" style="left:702.00px;top:38.08px;font-size:12.75px;line-height:14.67px;color:#444;font-weight:normal;transform:scaleX(1.015);">Help</div>
<div class="t" style="left:785.00px;top:38.29px;font-size:12.39px;line-height:14.25px;color:#444;font-weight:normal;transform:scaleX(0.977);">Search</div>
<div class="t" style="left:877.30px;top:4.06px;font-size:12.54px;line-height:14.42px;color:#A6A6A6;font-weight:normal;transform:scaleX(0.854);">Scan</div>
<div class="b" style="left:906px;top:6px;width:1px;height:9px;background:#A6A6A6"></div>
<div class="b" style="left:0px;top:155px;width:907px;height:1px;background:#D4D0CC"></div>
<div class="b" style="left:0px;top:156px;width:907px;height:5px;background:linear-gradient(#EBEBEB,#fff)"></div>
<div class="t" style="left:13.85px;top:100.85px;font-size:12.90px;line-height:14.83px;color:#444;font-weight:normal;transform:scaleX(0.827);">Paste</div>
<div class="t" style="left:70.60px;top:66.82px;font-size:13.04px;line-height:15.00px;color:#444;font-weight:normal;transform:scaleX(0.907);">Cut</div>
<div class="t" style="left:70.50px;top:92.20px;font-size:12.82px;line-height:14.74px;color:#444;font-weight:normal;transform:scaleX(0.912);">Copy</div>
<div class="t" style="left:71.00px;top:116.35px;font-size:12.46px;line-height:14.33px;color:#444;font-weight:normal;transform:scaleX(0.934);">Format Painter</div>
<div class="t" style="left:46.80px;top:140.78px;font-size:10.70px;line-height:12.31px;color:#444;font-weight:normal;transform:scaleX(1.085);">Clipboard</div>
<div class="t" style="left:174.25px;top:75.94px;font-size:12.61px;line-height:14.50px;color:#262626;font-weight:normal;transform:scaleX(0.933);">Calibri</div>
<div class="t" style="left:285.30px;top:75.73px;font-size:12.97px;line-height:14.92px;color:#262626;font-weight:normal;transform:scaleX(0.808);">11</div>
<div class="t" style="left:249.80px;top:141.43px;font-size:11.30px;line-height:13.00px;color:#444;font-weight:normal;transform:scaleX(1.026);">Font</div>
<div class="t" style="left:535.60px;top:75.62px;font-size:12.17px;line-height:14.00px;color:#444;font-weight:normal;transform:scaleX(0.942);">Wrap Text</div>
<div class="t" style="left:535.80px;top:108.42px;font-size:12.17px;line-height:14.00px;color:#444;font-weight:normal;transform:scaleX(0.979);">Merge &amp; Center</div>
<div class="t" style="left:477.10px;top:140.63px;font-size:10.87px;line-height:12.50px;color:#444;font-weight:normal;transform:scaleX(1.095);">Alignment</div>
<div class="t" style="left:660.00px;top:75.73px;font-size:12.97px;line-height:14.92px;color:#262626;font-weight:normal;transform:scaleX(0.933);">Number</div>
<div class="t" style="left:692.80px;top:140.56px;font-size:11.16px;line-height:12.83px;color:#444;font-weight:normal;transform:scaleX(1.011);">Number</div>
<div class="t" style="left:808.50px;top:101.56px;font-size:12.11px;line-height:13.93px;color:#444;font-weight:normal;transform:scaleX(1.008);">Conditional</div>
<div class="t" style="left:805.70px;top:118.36px;font-size:12.03px;line-height:13.83px;color:#444;font-weight:normal;transform:scaleX(1.009);">Formatting</div>
<div class="t" style="left:877.60px;top:101.35px;font-size:12.46px;line-height:14.33px;color:#444;font-weight:normal;transform:scaleX(0.961);">Format</div>
<div class="t" style="left:886.50px;top:116.36px;font-size:12.03px;line-height:13.83px;color:#444;font-weight:normal;transform:scaleX(0.922);">Table</div>
<div class="t" style="left:10.80px;top:171.68px;font-size:13.19px;line-height:15.17px;color:#262626;font-weight:normal;transform:scaleX(0.913);">L11</div>
<div class="t" style="left:454.30px;top:172.97px;font-size:12.96px;line-height:14.90px;color:#262626;font-weight:normal;transform:scaleX(0.971);">38.1379</div>
<div class="t" style="left:178.60px;top:104.88px;font-size:14.06px;line-height:16.17px;color:#333;font-weight:bold;transform:scaleX(0.721);">B</div>
<div class="t" style="left:462px;top:74px;font-size:11px;line-height:11px;color:#444;transform:rotate(-45deg);transform-origin:50% 50%">ab</div>
<div class="t" style="left:518px;top:73.5px;font-size:10.5px;line-height:10px;color:#444">ab</div>
<div class="t" style="left:518px;top:80.5px;font-size:10.5px;line-height:10px;color:#444">c</div>
<svg class="s" style="left:0;top:0" width="907" height="200"><line x1="162.5" y1="63" x2="162.5" y2="151" stroke="#D6D6D6"/><line x1="375.5" y1="63" x2="375.5" y2="151" stroke="#D6D6D6"/><line x1="645.5" y1="63" x2="645.5" y2="151" stroke="#D6D6D6"/><line x1="794.5" y1="63" x2="794.5" y2="151" stroke="#D6D6D6"/><path d="M151.5 149.8 V144.5 H157" fill="none" stroke="#666"/><path d="M154.5 147.5 L157.5 150.5" fill="none" stroke="#666"/><path d="M158.2 147.6 V151.2 H154.6 Z" fill="#666"/><path d="M365.5 149.8 V144.5 H371" fill="none" stroke="#666"/><path d="M368.5 147.5 L371.5 150.5" fill="none" stroke="#666"/><path d="M372.2 147.6 V151.2 H368.6 Z" fill="#666"/><path d="M636.5 149.8 V144.5 H642" fill="none" stroke="#666"/><path d="M639.5 147.5 L642.5 150.5" fill="none" stroke="#666"/><path d="M643.2 147.6 V151.2 H639.6 Z" fill="#666"/><path d="M783.5 149.8 V144.5 H789" fill="none" stroke="#666"/><path d="M786.5 147.5 L789.5 150.5" fill="none" stroke="#666"/><path d="M790.2 147.6 V151.2 H786.6 Z" fill="#666"/><rect x="78.5" y="3.5" width="37" height="15" rx="7.5" fill="#fff" stroke="#444"/><circle cx="86" cy="11" r="3.6" fill="#444"/><path d="M131.5 5.5 H146.5 V20.5 H133.5 L131.5 18.5 Z" fill="#DDA0DC" stroke="#A030A0" stroke-width="1.2"/><rect x="134.5" y="5.5" width="9" height="5.5" fill="#fff" stroke="#A030A0"/><rect x="135.5" y="15.5" width="7" height="5" fill="#fff" stroke="#A030A0"/><path d="M161.5 5 V11.5 H167.5" fill="none" stroke="#333" stroke-width="1.1"/><path d="M162 11 L166.5 6.8 C169.5 4.3 175.5 5.3 175.5 10 C175.5 12 174.5 13.5 166.5 20.8" fill="none" stroke="#333" stroke-width="1.1"/><path d="M180 9.7 h5 l-2.5 2.9 z" fill="#555"/><path d="M209.5 5 V11.5 H203.5" fill="none" stroke="#ABABAB" stroke-width="1.1"/><path d="M209 11 L204.5 6.8 C201.5 4.3 195.5 5.3 195.5 10 C195.5 12 196.5 13.5 204.5 20.8" fill="none" stroke="#ABABAB" stroke-width="1.1"/><path d="M215.2 9.7 h5 l-2.5 2.9 z" fill="#B8B8B8"/><path d="M230.5 16 V19.5 H245.5 V5.5 H244.5" fill="none" stroke="#222" stroke-width="1.1"/><path d="M235 16.5 H237 M238.5 16.5 H242" stroke="#555"/><path d="M230.8 8 L233.5 6.3 L236.5 8 V13.5 L233.5 15.2 L230.8 13.5 Z M230.8 8 L233.5 9.6 L236.5 8 M233.5 9.6 V15" fill="#fff" stroke="#1E88D8" stroke-width="1.2"/><path d="M236.8 7 L239.6 5.4 L242.5 7 V11 L239.6 12.6 L236.8 11 Z M236.8 7 L239.6 8.5 L242.5 7 M239.6 8.5 V12.4" fill="#fff" stroke="#B040C0" stroke-width="1.2"/><path d="M256.5 5 V21" stroke="#333" stroke-width="1.1"/><rect x="258.7" y="5.7" width="6" height="2.8" fill="#fff" stroke="#333"/><rect x="258.7" y="10.7" width="12.6" height="3.6" fill="#fff" stroke="#333"/><path d="M258.5 18.5 H265 M261 16.3 L258.8 18.5 L261 20.7" fill="none" stroke="#1E88D8" stroke-width="1.2"/><path d="M278 10 h5 l-2.5 2.8 z" fill="#555"/><path d="M303.8 5.6 L309.2 10.8 L299.4 20.4 L294.2 15.2 Z" fill="#fff" stroke="#A030A0" stroke-width="1.2"/><path d="M299.2 10.4 L304.3 15.4 L299.4 20.4 L294.2 15.2 Z" fill="#DDA0DC" stroke="#A030A0" stroke-width="1.2"/><path d="M321.5 13 V5.5 H332.5 V15" fill="#F7F7F7" stroke="#444" stroke-dasharray="2.2 1.6"/><path d="M319.5 14.5 H321.5 L322.5 13.3 H325.5 L326.5 14.5 H328.7 V20.7 H319.5 Z" fill="#D6D6D6" stroke="#222" stroke-width="1.1"/><circle cx="324" cy="17.2" r="1.7" fill="#fff" stroke="#222"/><path d="M332.5 15.8 V21.2 M329.8 18.5 H335.2" stroke="#1FA048" stroke-width="1.3"/><path d="M341.2 10 h5 l-2.5 2.6 z" fill="#555"/><path d="M362 9.5 H367" stroke="#2E9D57" stroke-width="1.1"/><path d="M362 11.8 h5 l-2.5 3 z" fill="#2E9D57"/><rect x="16.5" y="71.5" width="20" height="23" fill="#FBE0A0" stroke="#EE8430" stroke-width="1.1"/><rect x="19.2" y="73.5" width="15.3" height="18.3" fill="#FAFAFA"/><rect x="28" y="78" width="16" height="20" fill="#fff"/><path d="M20.5 74.5 V70.5 H23.5 C24 68 25.5 67 26.6 67 C27.7 67 29.2 68 29.7 70.5 H32.7 V74.5 Z" fill="#fff" stroke="#777" stroke-width="1.1"/><rect x="29.5" y="79.5" width="13" height="17" fill="#FAFAFA" stroke="#333" stroke-width="1.1"/><path d="M24 122 h5 l-2.5 3 z" fill="#555"/><path d="M56 66.5 L61 78 M62 66.5 L57 78" stroke="#444" stroke-width="1.1"/><circle cx="56" cy="79.5" r="1.7" fill="#fff" stroke="#2B8CDA" stroke-width="1.3"/><circle cx="62" cy="79.5" r="1.7" fill="#fff" stroke="#2B8CDA" stroke-width="1.3"/><path d="M55.8 103.5 H51.5 V90.5 H56.5 L58.3 91.8" fill="none" stroke="#333" stroke-width="1.1"/><path d="M57.6 93.6 H63 L66.6 97.2 V105.5 H57.6 Z" fill="#fff" stroke="#333" stroke-width="1.1"/><path d="M62.9 93.8 V97.4 H66.4" fill="none" stroke="#333" stroke-width="1.1"/><path d="M60 100.5 H64 M60 102.5 H64" stroke="#444"/><path d="M108 97 h5 l-2.5 3 z" fill="#555"/><path d="M58 117.5 L51.7 120.8 L57.8 128.6 L63.3 123.5 Z" fill="#fff" stroke="#EE8B33" stroke-width="1.2"/><path d="M54 123.6 L61.2 125.4 L57.9 128.2 Z" fill="#F8D07A"/><path d="M57.5 117.8 L59.7 115.8 L64.7 121 L62.8 123.2 Z" fill="#fff" stroke="#333" stroke-width="1.1"/><path d="M60.8 117.9 L64.7 114.2 C65.3 113.6 66.4 113.9 66.6 114.5 C66.9 115.2 66.6 115.8 66.2 116.2 L62.4 119.9" fill="#fff" stroke="#333" stroke-width="1.1"/><rect x="171.5" y="71.5" width="110" height="22" fill="#fff" stroke="#C6C6C6"/><rect x="282.5" y="71.5" width="42" height="22" fill="#fff" stroke="#C6C6C6"/><path d="M271.5 81.5 h5 l-2.5 3 z" fill="#555"/><path d="M314.5 81.5 h5 l-2.5 3 z" fill="#555"/><path d="M331.5 85.5 L335.3 76 L339.2 85.5 M333 82 H337.7" fill="none" stroke="#444" stroke-width="1.1"/><path d="M339.5 77.5 L341.8 75.2 L344 77.5" fill="none" stroke="#2B8CDA" stroke-width="1.3"/><path d="M353.5 85.5 L356.7 77.6 L360 85.5 M354.8 82.5 H358.7" fill="none" stroke="#444" stroke-width="1.1"/><path d="M361 75.3 L363.5 77.6 L366 75.3" fill="none" stroke="#2B8CDA" stroke-width="1.3"/><path d="M202.6 108.7 H207.6 M200.4 117.4 H205.4 M205.2 108.7 L202.8 117.4" fill="none" stroke="#444" stroke-width="1.1"/><path d="M222 108 V114 C222 118.5 229 118.5 229 114 V108" fill="none" stroke="#444" stroke-width="1.2"/><path d="M221 120 H230" stroke="#444" stroke-width="1.2"/><path d="M240 113 h5 l-2.5 3 z" fill="#555"/><line x1="253.5" y1="104.5" x2="253.5" y2="124.5" stroke="#D6D6D6"/><rect x="261.5" y="106.5" width="14" height="13" fill="none" stroke="#AAA" stroke-dasharray="1.5 1.5"/><path d="M268.5 107 V119 M262 113.5 H275" stroke="#AAA" stroke-dasharray="1.5 1.5"/><path d="M261 120.5 H276" stroke="#333" stroke-width="1.2"/><path d="M283 113 h5 l-2.5 3 z" fill="#555"/><line x1="296.5" y1="104.5" x2="296.5" y2="124.5" stroke="#D6D6D6"/><path d="M311.3 107.8 L306.8 112.6 L311 116.6 L316 111.3" fill="#fff" stroke="#333" stroke-width="1.1"/><path d="M311.3 107.8 C311.8 106.2 313.6 106.2 313.6 108 V111.6" fill="none" stroke="#333" stroke-width="1.1"/><path d="M315.8 110.6 C317.3 109.6 318.6 111.3 317.6 115.5" fill="none" stroke="#1F6CC0" stroke-width="1.5"/><rect x="304" y="118" width="16" height="4" fill="#FFFF00"/><path d="M326 113 h5 l-2.5 3 z" fill="#555"/><path d="M341.5 117 L346.2 106.5 L351 117 M343.5 113.5 H349" fill="none" stroke="#333" stroke-width="1.2"/><rect x="338" y="118" width="16" height="4" fill="#FF0000"/><path d="M360 113 h5 l-2.5 3 z" fill="#555"/><rect x="429" y="71" width="22" height="23" fill="#9FD5B7"/><rect x="407" y="103" width="22" height="23" fill="#9FD5B7"/><path d="M389 74.5 H403" stroke="#333" stroke-width="1.1"/><path d="M391 78.5 H401" stroke="#333" stroke-width="1.1"/><path d="M389 82.5 H403" stroke="#333" stroke-width="1.1"/><path d="M411 77.5 H425" stroke="#333" stroke-width="1.1"/><path d="M413 81.5 H423" stroke="#333" stroke-width="1.1"/><path d="M411 85.5 H425" stroke="#333" stroke-width="1.1"/><path d="M433 81.5 H447" stroke="#333" stroke-width="1.1"/><path d="M435 85.5 H445" stroke="#333" stroke-width="1.1"/><path d="M433 89.5 H447" stroke="#333" stroke-width="1.1"/><path d="M389 107.5 H403" stroke="#333" stroke-width="1.1"/><path d="M389 111.5 H399" stroke="#333" stroke-width="1.1"/><path d="M389 115.5 H403" stroke="#333" stroke-width="1.1"/><path d="M389 119.5 H399" stroke="#333" stroke-width="1.1"/><path d="M411 107.5 H425" stroke="#333" stroke-width="1.1"/><path d="M413 111.5 H423" stroke="#333" stroke-width="1.1"/><path d="M411 115.5 H425" stroke="#333" stroke-width="1.1"/><path d="M413 119.5 H423" stroke="#333" stroke-width="1.1"/><path d="M433 107.5 H447" stroke="#333" stroke-width="1.1"/><path d="M437 111.5 H447" stroke="#333" stroke-width="1.1"/><path d="M433 115.5 H447" stroke="#333" stroke-width="1.1"/><path d="M437 119.5 H447" stroke="#333" stroke-width="1.1"/><line x1="455.5" y1="72" x2="455.5" y2="93" stroke="#D6D6D6"/><line x1="455.5" y1="104" x2="455.5" y2="125" stroke="#D6D6D6"/><line x1="508.5" y1="69" x2="508.5" y2="127" stroke="#D6D6D6"/><path d="M468.5 88.5 L478.5 78.5 M474 78.5 H478.5 V83" fill="none" stroke="#2B8CDA" stroke-width="1.2"/><path d="M483 81.3 h5 l-2.5 2.6 z" fill="#555"/><path d="M464 107.5 H478" stroke="#333" stroke-width="1.1"/><path d="M464 119.5 H478" stroke="#333" stroke-width="1.1"/><path d="M472 111.5 H478" stroke="#333" stroke-width="1.1"/><path d="M472 115.5 H478" stroke="#333" stroke-width="1.1"/><path d="M464 113.5 H470 M467 110.5 L464 113.5 L467 116.5" fill="none" stroke="#2B8CDA" stroke-width="1.2"/><path d="M486 107.5 H500" stroke="#333" stroke-width="1.1"/><path d="M486 119.5 H500" stroke="#333" stroke-width="1.1"/><path d="M494 111.5 H500" stroke="#333" stroke-width="1.1"/><path d="M494 115.5 H500" stroke="#333" stroke-width="1.1"/><path d="M486 113.5 H492 M489 110.5 L492 113.5 L489 116.5" fill="none" stroke="#2B8CDA" stroke-width="1.2"/><path d="M530 82.5 C532 84 530.5 87 525 86.5 M527 84.5 L524.5 86.5 L527 88.5" fill="none" stroke="#2B8CDA" stroke-width="1.2"/><rect x="516.5" y="106.5" width="14" height="14" fill="#fff" stroke="#333"/><path d="M523.5 106.5 V109 M523.5 118 V120.5" stroke="#333"/><rect x="516.5" y="109.5" width="14" height="8" fill="#fff" stroke="#2B8CDA" stroke-width="1.2"/><path d="M518.5 113.5 H528.5 M520.5 111.5 L518.5 113.5 L520.5 115.5 M526.5 111.5 L528.5 113.5 L526.5 115.5" fill="none" stroke="#2B8CDA" stroke-width="1.1"/><path d="M630 113 h5 l-2.5 3 z" fill="#555"/><rect x="656.5" y="71.5" width="130" height="22" fill="#fff" stroke="#C6C6C6"/><path d="M776.5 81.5 h5 l-2.5 3 z" fill="#555"/><path d="M669.3 109.6 C668.7 108.3 667.6 107.8 666.4 107.8 C664.4 107.8 663.2 109 663.2 110.6 C663.2 112.5 665 113.2 666.6 113.9 C668.6 114.7 670.1 115.6 670.1 117.6 C670.1 119.3 668.7 120.2 666.6 120.2 C665 120.2 663.8 119.6 663 118.4 M666.6 106 V121.8" fill="none" stroke="#333" stroke-width="1.1"/><path d="M681.2 113 h5 l-2.5 2.8 z" fill="#555"/><circle cx="697.2" cy="110.3" r="2.6" fill="none" stroke="#333" stroke-width="1.1"/><circle cx="704.7" cy="117.7" r="2.6" fill="none" stroke="#333" stroke-width="1.1"/><path d="M706.5 107.4 L695.8 120.8" stroke="#333" stroke-width="1.1"/><path d="M723.3 108.5 C725.5 108.5 726.9 110.2 726.9 112.6 C726.9 116.3 724.3 119 720.3 120 L719.9 119 C722.2 118 723.4 116.8 723.6 115.6 C721.6 115.6 720.1 114.2 720.1 112.1 C720.1 110 721.5 108.5 723.3 108.5 Z" fill="#333"/><line x1="738.5" y1="104" x2="738.5" y2="125" stroke="#D6D6D6"/><path d="M747 110.4 H755 M749.8 107.5 L746.8 110.4 L749.8 113.3" fill="none" stroke="#1E88D8" stroke-width="1.2"/><rect x="754.2" y="111.7" width="1.2" height="1.2" fill="#555"/><ellipse cx="758.7" cy="109.5" rx="1.9" ry="2.8" fill="none" stroke="#666" stroke-width="1"/><rect x="748" y="119.4" width="1.2" height="1.2" fill="#555"/><ellipse cx="753" cy="117.5" rx="1.9" ry="2.8" fill="none" stroke="#666" stroke-width="1"/><ellipse cx="758.7" cy="117.5" rx="1.9" ry="2.8" fill="none" stroke="#666" stroke-width="1"/><rect x="770.4" y="111.7" width="1.2" height="1.2" fill="#555"/><ellipse cx="774.8" cy="109.5" rx="1.9" ry="2.8" fill="none" stroke="#666" stroke-width="1"/><ellipse cx="780.6" cy="109.5" rx="1.9" ry="2.8" fill="none" stroke="#666" stroke-width="1"/><path d="M768 117.4 H776.2 M773.3 114.5 L776.3 117.4 L773.3 120.3" fill="none" stroke="#1E88D8" stroke-width="1.2"/><rect x="776.4" y="119.4" width="1.2" height="1.2" fill="#555"/><ellipse cx="780.6" cy="117.5" rx="1.9" ry="2.8" fill="none" stroke="#666" stroke-width="1"/><rect x="825.5" y="70.5" width="27" height="21" fill="#F4F4F4" stroke="#333" stroke-width="1.2"/><path d="M825.5 77.5 H852.5 M825.5 84.5 H852.5 M847.5 70.5 V91.5" stroke="#333"/><rect x="830.5" y="70.5" width="12" height="7" fill="#F7A1A8" stroke="#E02020" stroke-width="1.2"/><rect x="830.5" y="77.5" width="8" height="7" fill="#8CC0EA" stroke="#1F6FC6" stroke-width="1.2"/><rect x="830.5" y="84.5" width="14" height="7" fill="#F7A1A8" stroke="#E02020" stroke-width="1.2"/><path d="M867 122 h5 l-2.5 3 z" fill="#555"/><rect x="889.5" y="70.5" width="30" height="21" fill="#F4F4F4" stroke="#333" stroke-width="1.2"/><path d="M889.5 77.5 H920 M889.5 84.5 H920 M898.5 70.5 V91.5" stroke="#333"/><rect x="898.5" y="77.5" width="20" height="14" fill="#8CC0EA" stroke="#1F6FC6" stroke-width="1.2"/><path d="M898.5 84.5 H919" stroke="#1F6FC6"/><path d="M895.5 96.3 C899.5 97 902.3 95.2 903.6 92.2 C904.6 90 905.8 88.2 907.5 87.3 V94 C905.5 96 902 97.5 895.5 96.3 Z" fill="#8CC0EA" stroke="#1F6FC6"/><rect x="3.5" y="166.5" width="295" height="25" fill="#FDFDFD" stroke="#C6C6C6"/><path d="M284.8 176 h7.4 l-3.7 4 z" fill="#666"/><rect x="313.2" y="174" width="1.7" height="1.7" fill="#888"/><rect x="313.2" y="178.2" width="1.7" height="1.7" fill="#888"/><rect x="313.2" y="182.4" width="1.7" height="1.7" fill="#888"/><rect x="329.5" y="166.5" width="109" height="25" fill="#FDFDFD" stroke="#C6C6C6"/><path d="M343 175 L353 183.5 M353 175 L343 183.5" stroke="#BDBDBD" stroke-width="1.3"/><path d="M378.2 178.8 L383.3 184 L390.8 174.5" fill="none" stroke="#BDBDBD" stroke-width="1.9"/><path d="M419.5 176 C420.5 173.5 421.8 172.8 423.2 173.3 M420.2 175 L417 185 C416.4 186.5 415.2 186.6 414.3 185.5 M417.5 176.8 H421.2" fill="none" stroke="#555" stroke-width="1.6"/><path d="M420 178.5 C421.5 178.3 422 179.2 422.5 180.5 L423.4 183 C423.8 184.2 424.6 184.3 425.5 183.3 M425.5 178.8 C424.5 178.2 423.6 179.3 421.5 182 C420.8 183 420 184.2 419.2 183.8" fill="none" stroke="#555" stroke-width="1.5"/><rect x="442.5" y="166.5" width="480" height="25" fill="#FDFDFD" stroke="#C6C6C6"/><circle cx="769" cy="42" r="4.7" fill="none" stroke="#444" stroke-width="1.1"/><path d="M765.5 45.5 L759.5 51.5" stroke="#444" stroke-width="1.3"/></svg>
</body></html>
